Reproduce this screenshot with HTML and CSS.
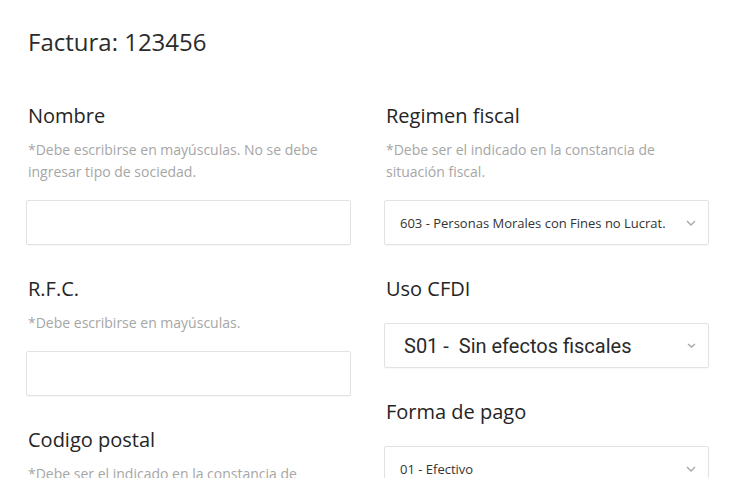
FILE: index.html
```html
<!DOCTYPE html>
<html lang="es">
<head>
  <meta charset="UTF-8">
  <meta name="viewport" content="width=device-width, initial-scale=1.0">
  <title>Factura</title>
  <link rel="stylesheet" href="styles.css">
</head>
<body>
  <h1 class="title">Factura: 123456</h1>

  <form class="form">
    <div class="col">
      <div class="field">
        <label class="label">Nombre</label>
        <p class="hint">*Debe escribirse en mayúsculas. No se debe ingresar tipo de sociedad.</p>
        <input class="control" type="text">
      </div>
      <div class="field">
        <label class="label">R.F.C.</label>
        <p class="hint">*Debe escribirse en mayúsculas.</p>
        <input class="control" type="text">
      </div>
      <div class="field">
        <label class="label">Codigo postal</label>
        <p class="hint">*Debe ser el indicado en la constancia de situación fiscal.</p>
        <input class="control" type="text">
      </div>
    </div>

    <div class="col">
      <div class="field">
        <label class="label">Regimen fiscal</label>
        <p class="hint">*Debe ser el indicado en la constancia de situación fiscal.</p>
        <div class="control select">
          <span>603 - Personas Morales con Fines no Lucrat.</span>
          <svg class="chev" width="10" height="6" viewBox="0 0 10 6"><path d="M1 1l4 4 4-4" fill="none" stroke="#a8a8a8" stroke-width="1.4"/></svg>
        </div>
      </div>
      <div class="field">
        <label class="label">Uso CFDI</label>
        <div class="control select big">
          <span>S01 -&nbsp; Sin efectos fiscales</span>
          <svg class="chev" width="9" height="5" viewBox="0 0 9 5"><path d="M1 1l3.5 3 3.5-3" fill="none" stroke="#a8a8a8" stroke-width="1.4"/></svg>
        </div>
      </div>
      <div class="field">
        <label class="label">Forma de pago</label>
        <div class="control select">
          <span>01 - Efectivo</span>
          <svg class="chev" width="10" height="6" viewBox="0 0 10 6"><path d="M1 1l4 4 4-4" fill="none" stroke="#a8a8a8" stroke-width="1.4"/></svg>
        </div>
      </div>
    </div>
  </form>
</body>
</html>
```

FILE: styles.css
```css
body {
  font-family: "Open Sans", "Noto Sans", sans-serif;
  color: #222;
  margin: 0;
  padding: 0 23px 0 26px;
  background: #fff;
}

.title {
  font-size: 24px;
  font-weight: 400;
  line-height: 30px;
  color: #2b2b2b;
  margin: 27px 0 46px 2px;
}

.form {
  display: grid;
  grid-template-columns: 1fr 1fr;
  column-gap: 33px;
}

.col {
  display: flex;
  flex-direction: column;
}

.field {
  display: flex;
  flex-direction: column;
  margin-bottom: 31px;
}

.label {
  font-size: 20px;
  line-height: 26px;
  color: #252525;
  margin: 0 0 10px 2px;
}

.hint {
  max-width: 300px;
  font-size: 14px;
  line-height: 22px;
  color: #a6a6a6;
  margin: 0 0 6px 2px;
}

.control {
  box-sizing: border-box;
  height: 45px;
  margin-top: 11px;
  border: 1px solid #e2e2e2;
  border-radius: 2px;
  background: #fff;
  box-shadow: 0 1px 1px rgba(0, 0, 0, 0.03);
}

input.control {
  font: inherit;
  padding: 0 12px;
}

.select {
  display: flex;
  align-items: center;
  justify-content: space-between;
  padding: 0 12px 0 15px;
  font-size: 13px;
  color: #333;
}

.select.big {
  font-family: Roboto, sans-serif;
  font-size: 20px;
  padding-left: 19px;
  color: #2a2a2a;
}

.chev {
  flex: none;
}
```
